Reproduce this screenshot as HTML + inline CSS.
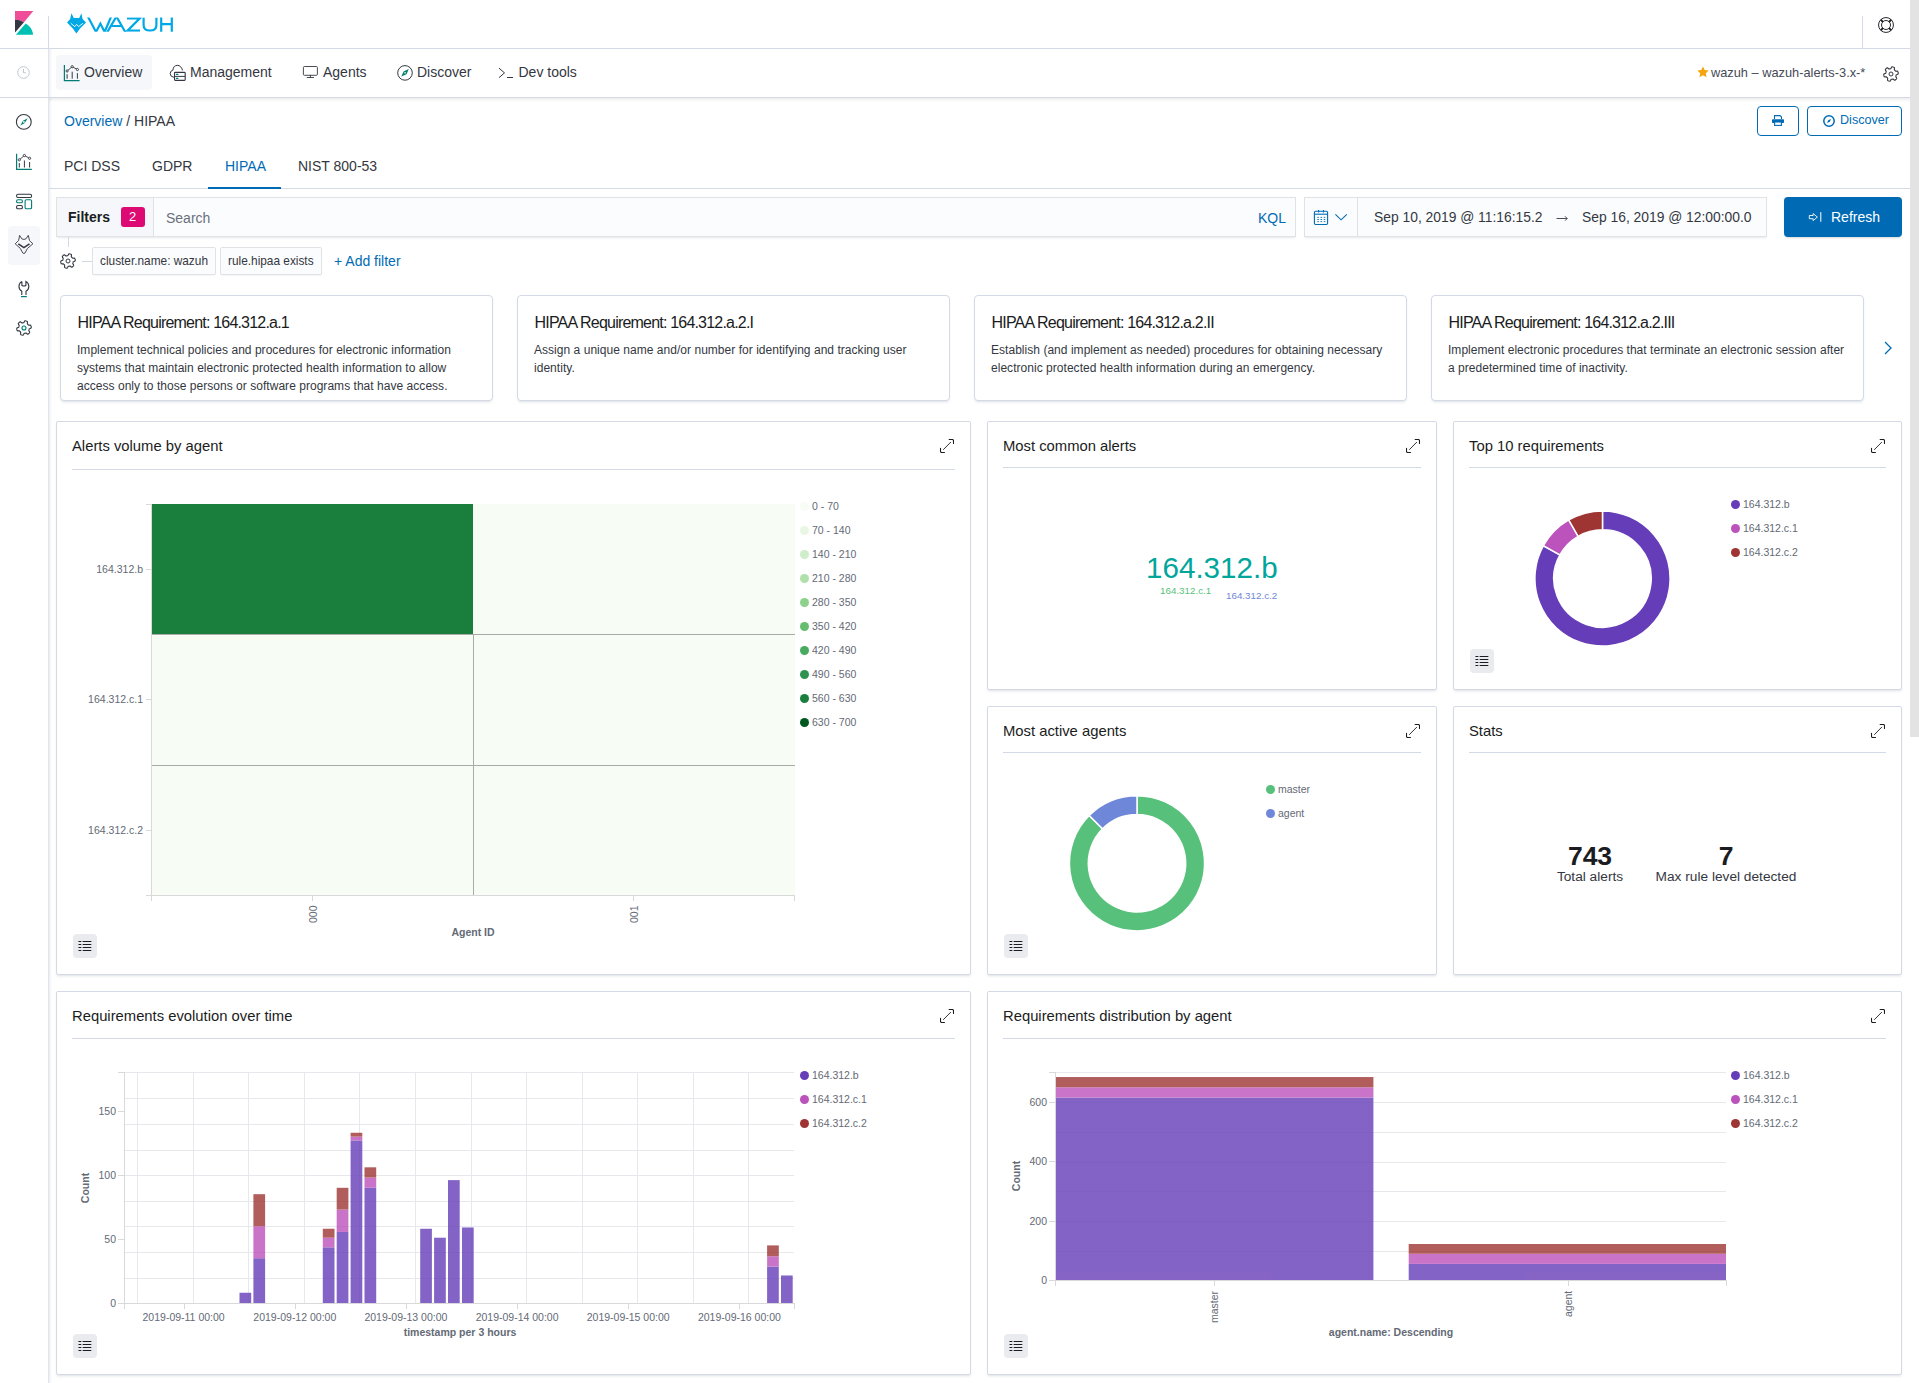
<!DOCTYPE html>
<html><head><meta charset="utf-8">
<style>
*{box-sizing:border-box;margin:0;padding:0}
html,body{width:1919px;height:1383px;overflow:hidden;background:#fff;font-family:"Liberation Sans",sans-serif;color:#343741}
.a{position:absolute}
.t{position:absolute;white-space:nowrap;line-height:1}
.hl{position:absolute;background:#d3dae6}
.btn{position:absolute;border:1px solid #006bb4;border-radius:4px;background:#fff}
.panel{position:absolute;background:#fff;border:1px solid #d3dae6;border-radius:2px;box-shadow:0 2px 3px -1px rgba(152,162,179,.35)}
.ptitle{position:absolute;left:15px;top:16px;font-size:15px;color:#1a1c21;white-space:nowrap;line-height:17px}
.psep{position:absolute;left:15px;height:1px;background:#d3dae6}
.exp{position:absolute;width:14px;height:14px}
.legbtn{position:absolute;width:25px;height:25px;border-radius:4px;background:#e9ebef}
.card{position:absolute;top:295px;height:106px;width:433px;border:1px solid #d3dae6;border-radius:4px;background:#fff;box-shadow:0 2px 3px -1px rgba(152,162,179,.35)}
.card h3{position:absolute;left:16.5px;top:18px;font-size:16px;font-weight:normal;letter-spacing:-0.8px;color:#1a1c21;white-space:nowrap;line-height:18px}
.card p{position:absolute;left:16px;top:45px;width:400px;font-size:12px;letter-spacing:0.035px;line-height:18px;color:#343741}
.lg{position:absolute;font-size:11px;color:#69707d;white-space:nowrap;line-height:12px}
.lg i{display:inline-block;width:8px;height:8px;border-radius:50%;margin-right:3px;vertical-align:-0px}
.ax{position:absolute;font-size:11px;color:#69707d;white-space:nowrap;line-height:12px}
</style></head><body>
<svg width="0" height="0" style="position:absolute"><defs><path id="gearp" d="M8.0 2.4 8.4 1.5 8.9 0.8 9.4 0.8 9.9 0.9 10.3 1.1 10.8 1.3 11.2 1.5 11.5 1.9 11.4 2.9 11.3 3.7 11.5 4.0 11.7 4.3 12.0 4.5 12.2 4.8 12.4 5.1 12.9 5.2 13.8 5.1 14.7 5.2 14.9 5.7 15.1 6.1 15.2 6.6 15.2 7.0 15.3 7.5 15.0 8.0 14.1 8.4 13.3 8.7 13.2 9.0 13.1 9.4 13.0 9.7 12.9 10.0 12.8 10.3 12.9 10.8 13.4 11.6 13.7 12.4 13.5 12.8 13.2 13.2 12.8 13.5 12.4 13.8 12.1 14.1 11.5 14.1 10.7 13.5 10.1 13.0 9.7 13.0 9.4 13.1 9.0 13.2 8.7 13.3 8.3 13.3 8.0 13.6 7.6 14.5 7.1 15.2 6.6 15.2 6.1 15.1 5.7 14.9 5.2 14.7 4.8 14.5 4.5 14.1 4.6 13.1 4.7 12.3 4.5 12.0 4.3 11.7 4.0 11.5 3.8 11.2 3.6 10.9 3.1 10.8 2.2 10.9 1.3 10.8 1.1 10.3 0.9 9.9 0.8 9.4 0.8 9.0 0.7 8.5 1.0 8.0 1.9 7.6 2.7 7.3 2.8 7.0 2.9 6.6 3.0 6.3 3.1 6.0 3.2 5.7 3.1 5.2 2.6 4.4 2.3 3.6 2.5 3.2 2.8 2.8 3.2 2.5 3.6 2.2 3.9 1.9 4.5 1.9 5.3 2.5 5.9 3.0 6.3 3.0 6.6 2.9 7.0 2.8 7.3 2.7 7.7 2.7Z"/></defs></svg>

<!-- ============ HEADER ============ -->
<div class="hl" style="left:0;top:48px;width:1910px;height:1px"></div>
<div class="hl" style="left:48px;top:16px;width:1px;height:33px"></div>
<div class="a" style="left:48px;top:49px;width:1px;height:1334px;background:#e1e4ea"></div>
<div class="a" style="left:49px;top:49px;width:3px;height:1334px;background:linear-gradient(90deg,rgba(152,162,179,.18),rgba(152,162,179,0))"></div>
<div class="hl" style="left:1862px;top:16px;width:1px;height:32px"></div>
<!-- kibana logo -->
<svg class="a" style="left:15px;top:11px" width="19" height="24" viewBox="0 0 19 24">
  <path d="M0 0H18.3L9 11.2Q4.5 8.6 0 8.8Z" fill="#f04e98"/>
  <path d="M0 8.8Q4.5 8.6 9 11.2L0 21.6Z" fill="#343741"/>
  <path d="M0.9 23.7L10.7 12.4C14.6 14.6 17.6 18.6 18.1 23.7Z" fill="#00bfb3"/>
</svg>
<!-- wazuh logo -->
<svg class="a" style="left:62px;top:8px" width="120" height="32" viewBox="62 8 120 32">
  <path d="M71.4 13.3 L73.8 18 L79.2 18 L81.4 13.3 L82.6 19 L86 22.4 L80 28.6 L76.4 33.6 L72.8 28.6 L67 22.4 L70.2 19Z" fill="#00a9e5"/>
  <path d="M70.8 23.3 L74.8 26.6 L76.7 24.4 L78.6 26.6 L82.9 23.3" stroke="#fff" stroke-width="0.9" fill="none"/>
  <defs><clipPath id="wzc"><rect x="86" y="17.4" width="90" height="14.3"/></clipPath></defs>
  <g fill="none" stroke="#00a9e5" stroke-width="2.2" stroke-linejoin="miter" stroke-linecap="butt" clip-path="url(#wzc)">
    <path d="M87.6 16 L96 32 L100.4 23.6 L104.6 32 L111.4 16"/>
    <path d="M106.8 33 L116.4 16.5 L125.8 33 M111.5 26 H121.5"/>
    <path d="M127 18.4 H139.8 L127.5 30.6 H140"/>
    <path d="M143.6 17.4 V25 C143.6 29.5 146 30.6 150 30.6 C154 30.6 156.4 29.5 156.4 25 V17.4"/>
    <path d="M161.2 16 V33 M171.8 16 V33 M161.2 24.2 H171.8"/>
  </g>
</svg>
<!-- help icon -->
<svg class="a" style="left:1876px;top:15px" width="20" height="20" viewBox="-10 -10 20 20">
  <circle cx="0" cy="0" r="7.45" fill="none" stroke="#1a1c21" stroke-width="0.95"/>
  <circle cx="0" cy="0" r="4.5" fill="none" stroke="#1a1c21" stroke-width="0.95"/>
  <path d="M-3.1 -3.1L-5.3 -5.3M3.1 -3.1L5.3 -5.3M-3.1 3.1L-5.3 5.3M3.1 3.1L5.3 5.3" stroke="#1a1c21" stroke-width="1.9"/>
</svg>

<!-- ============ NAV ROW ============ -->
<div class="hl" style="left:0;top:97px;width:1910px;height:1px"></div>
<div class="a" style="left:49px;top:98px;width:1861px;height:4px;background:linear-gradient(rgba(0,0,0,.07),rgba(0,0,0,0))"></div>
<!-- clock -->
<svg class="a" style="left:17px;top:66px" width="13" height="13" viewBox="0 0 13 13">
  <circle cx="6.5" cy="6.5" r="5.8" fill="none" stroke="#c2c7cf" stroke-width="1"/>
  <path d="M6.5 3V6.8H9" fill="none" stroke="#c2c7cf" stroke-width="1"/>
</svg>
<div class="a" style="left:56px;top:55px;width:96px;height:35px;background:#f5f7fa;border-radius:4px"></div>
<svg class="a" style="left:56px;top:58px" width="30" height="30" viewBox="56 58 30 30">
  <g fill="none" transform="translate(47.8,-88.8)">
    <path d="M16.6 153.8 V169.4 H31.8" stroke="#017d73" stroke-width="1.2"/>
    <path d="M19.3 159.8 L24.4 155.5 L29.6 158.3" stroke="#343741" stroke-width="0.9"/>
    <circle cx="19.3" cy="159.8" r="1.1" fill="#f5f7fa" stroke="#343741" stroke-width="0.9"/>
    <circle cx="24.4" cy="155.5" r="1.1" fill="#f5f7fa" stroke="#343741" stroke-width="0.9"/>
    <circle cx="29.6" cy="158.3" r="1.1" fill="#f5f7fa" stroke="#343741" stroke-width="0.9"/>
    <path d="M19.3 163V167.5 M24.4 160.5V167.5 M29.6 162V167.5" stroke="#343741" stroke-width="1"/>
  </g>
</svg>
<div class="t" style="left:84px;top:65px;font-size:14px;color:#343741">Overview</div>

<div class="t" style="left:190px;top:65px;font-size:14px;color:#343741">Management</div>

<div class="t" style="left:323px;top:65px;font-size:14px;color:#343741">Agents</div>

<div class="t" style="left:417px;top:65px;font-size:14px;color:#343741">Discover</div>
<div class="t" style="left:518.5px;top:65px;font-size:14px;color:#343741">Dev tools</div>
<svg class="a" style="left:160px;top:55px" width="360" height="35" viewBox="160 55 360 35">
  <g fill="none" stroke="#343741" stroke-width="1">
    <path d="M173.9 77.3 Q170.2 76.8 170.2 73.6 Q170.2 70.8 172.9 70.1 Q173.3 65.6 177.3 65.3 Q181 65.3 182.6 70.4"/>
    <rect x="174.5" y="72.4" width="10.7" height="8" rx="0.8" stroke-width="1.1"/>
    <path d="M174.5 76.4 H185.2"/>
    <path d="M176.4 74.4 H177.9 M176.4 78.4 H177.9" stroke="#017d73" stroke-width="1.2" stroke-linecap="round"/>
    <rect x="303.4" y="66.5" width="14" height="8.8" rx="1" stroke-width="0.9"/>
    <path d="M310.4 75.3 V77.4 M307.2 77.5 H313.6" stroke-width="0.9" stroke-linecap="round"/>
    <circle cx="405" cy="72.9" r="7.3" stroke-width="1"/>
    <path d="M408.8 69.1 L406.5 74.3 L401.3 76.6 L403.6 71.4Z" fill="#017d73" stroke="none"/>
    <circle cx="405.05" cy="72.85" r="0.8" fill="#fff" stroke="none"/>
    <path d="M499.3 68.4 L504.5 72.9 L499.3 77.4 M507.4 77.5 H512.7" stroke-width="1" stroke-linecap="round"/>
  </g>
</svg>
<!-- right -->
<svg class="a" style="left:1697px;top:66px" width="12" height="12" viewBox="0 0 24 24"><path d="M12 .8l3.4 7.3 8 .9-5.9 5.5 1.6 7.9L12 18.4l-7.1 4 1.6-7.9L.6 9l8-.9Z" fill="#f5a30f"/></svg>
<div class="t" style="left:1711px;top:67px;font-size:12.8px;color:#454a55">wazuh – wazuh-alerts-3.x-*</div>
<svg class="a" style="left:1883px;top:66px" width="16" height="16" viewBox="0 0 16 16">
  <use href="#gearp" fill="none" stroke="#343741" stroke-width="1.1"/>
  <circle cx="8" cy="8" r="2" fill="none" stroke="#343741" stroke-width="1"/>
</svg>

<!-- ============ LEFT NAV ============ -->
<div class="a" style="left:8px;top:226px;width:32px;height:39px;background:#f5f7fa;border-radius:4px"></div>
<svg class="a" style="left:0;top:100px" width="48" height="250" viewBox="0 100 48 250">
  <g fill="none" stroke-width="1.1">
    <circle cx="23.8" cy="121.9" r="7.4" stroke="#343741"/>
    <path d="M27.7 118.3 L24.8 123.1 L20.3 125.5 L23.0 120.8Z" fill="#017d73" stroke="none"/>
    <circle cx="23.9" cy="121.9" r="0.9" fill="#fff" stroke="none"/>
    <path d="M16.6 153.8 V169.4 H31.8" stroke="#017d73" stroke-width="1.2"/>
    <path d="M19.3 159.8 L24.4 155.5 L29.6 158.3" stroke="#343741" stroke-width="0.9"/>
    <circle cx="19.3" cy="159.8" r="1.1" fill="#fff" stroke="#343741" stroke-width="0.9"/>
    <circle cx="24.4" cy="155.5" r="1.1" fill="#fff" stroke="#343741" stroke-width="0.9"/>
    <circle cx="29.6" cy="158.3" r="1.1" fill="#fff" stroke="#343741" stroke-width="0.9"/>
    <path d="M19.3 163V167.5 M24.4 160.5V167.5 M29.6 162V167.5" stroke="#343741" stroke-width="1"/>
    <rect x="16.6" y="194.3" width="15" height="3.2" rx="1.4" stroke="#343741"/>
    <rect x="16.6" y="199.7" width="5.8" height="3" rx="1.3" stroke="#017d73"/>
    <rect x="16.6" y="205.5" width="5.8" height="3.2" rx="1.3" stroke="#343741"/>
    <rect x="25.1" y="199.7" width="6.5" height="9" rx="1.3" stroke="#017d73"/>
    <path d="M19.6 235.4 L21.9 238.9 Q23.9 240 25.9 238.9 L28.3 235.4 L29.5 240.5 L32.9 243.8 L27.4 248.5 L25 253 Q23.9 254 22.8 253 L20.4 248.5 L15.2 243.8 L18.6 240.5 Z" stroke="#343741" stroke-width="0.9" stroke-linejoin="round"/>
    <path d="M18.3 243.9 L23.9 247.6 L29.5 243.9" stroke="#343741" stroke-width="1.6"/>
    <path d="M21.9 281.4 V285.5 Q23.9 286.6 25.9 285.5 V281.4 A5.6 5.6 0 0 1 26 291.2 V295 M21.9 281.4 A5.6 5.6 0 0 0 21.8 291.2 V295" stroke="#343741" stroke-width="1.1"/>
    <path d="M21 296.6 H26.8" stroke="#017d73" stroke-width="1.2"/>
    <use href="#gearp" transform="translate(16,320)" stroke="#343741" stroke-width="1.1"/>
    <circle cx="24" cy="328" r="2" stroke="#017d73"/>
  </g>
</svg>

<!-- ============ BREADCRUMB / TABS ============ -->
<div class="t" style="left:64px;top:114px;font-size:14px;color:#343741"><span style="color:#006bb4">Overview</span> / HIPAA</div>
<div class="btn" style="left:1757px;top:106px;width:42px;height:30px"></div>
<svg class="a" style="left:1772px;top:115px" width="12" height="11" viewBox="0 0 12 11">
  <path d="M2.5 4V0.6H8L9.5 2V4" fill="none" stroke="#006bb4" stroke-width="1.1"/>
  <rect x="0" y="4.3" width="12" height="3.7" rx="0.8" fill="#006bb4"/>
  <rect x="2.6" y="7" width="6.8" height="3.4" fill="#fff" stroke="#006bb4" stroke-width="1.1"/>
</svg>
<div class="btn" style="left:1807px;top:106px;width:95px;height:30px"></div>
<svg class="a" style="left:1823px;top:115px" width="12" height="12" viewBox="0 0 12 12">
  <circle cx="6" cy="6" r="5.2" fill="none" stroke="#006bb4" stroke-width="1.5"/>
  <path d="M8 4 L6.8 6.8 L4 8 L5.2 5.2Z" fill="#006bb4"/>
</svg>
<div class="t" style="left:1840px;top:114px;font-size:12.6px;color:#006bb4">Discover</div>

<div class="hl" style="left:49px;top:188px;width:1861px;height:1px"></div>
<div class="t" style="left:64px;top:159px;font-size:14px;color:#343741">PCI DSS</div>
<div class="t" style="left:152px;top:159px;font-size:14px;color:#343741">GDPR</div>
<div class="t" style="left:225px;top:159px;font-size:14px;color:#006bb4">HIPAA</div>
<div class="t" style="left:298px;top:159px;font-size:14px;color:#343741">NIST 800-53</div>
<div class="a" style="left:208px;top:187px;width:73px;height:2px;background:#006bb4"></div>

<!-- ============ FILTER BAR ============ -->
<div class="a" style="left:56px;top:197px;width:1240px;height:40px;background:#fbfcfd;border:1px solid #e0e2e6;box-shadow:0 2px 2px -1px rgba(152,162,179,.25)"></div>
<div class="a" style="left:57px;top:198px;width:97px;height:38px;background:#f5f7fa;border-right:1px solid #dfe1e5"></div>
<div class="t" style="left:68px;top:210px;font-size:14px;font-weight:bold;color:#1a1c21">Filters</div>
<div class="a" style="left:121px;top:207px;width:24px;height:20px;background:#dd0a73;border-radius:3px"></div>
<div class="t" style="left:129px;top:210px;font-size:13px;color:#fff">2</div>
<div class="t" style="left:166px;top:211px;font-size:14px;color:#69707d">Search</div>
<div class="t" style="left:1258px;top:211px;font-size:14px;color:#006bb4">KQL</div>

<div class="a" style="left:1304px;top:197px;width:463px;height:40px;background:#fbfcfd;border:1px solid #e0e2e6;box-shadow:0 2px 2px -1px rgba(152,162,179,.25)"></div>
<div class="a" style="left:1305px;top:198px;width:53px;height:38px;background:#fbfcfd;border-right:1px solid #dfe1e5"></div>
<svg class="a" style="left:1310px;top:205px" width="40" height="25" viewBox="1310 205 40 25">
  <g fill="none" stroke="#006bb4">
    <rect x="1314.4" y="211.3" width="13.2" height="13.2" rx="1.2" stroke-width="1.1"/>
    <path d="M1314.4 214.2H1327.6" stroke-width="1.1"/>
    <path d="M1318.6 210V212.6M1323.4 210V212.6" stroke-width="1.1"/>
    <path d="M1317.3 217.4h1.6M1320.5 217.4h1.6M1323.7 217.4h1.6M1317.3 219.5h1.6M1320.5 219.5h1.6M1323.7 219.5h1.6M1317.3 221.6h1.6M1320.5 221.6h1.6M1323.7 221.6h1.6" stroke-width="0.9"/>
    <path d="M1335.4 214.4L1341.1 219.8L1346.8 214.4" stroke-width="1.1"/>
  </g>
</svg>

<div class="t" style="left:1374px;top:211px;font-size:13.85px;color:#343741">Sep 10, 2019 @ 11:16:15.2</div>
<svg class="a" style="left:1556px;top:215px" width="12" height="7" viewBox="0 0 12 7"><path d="M0.5 3.5H11.2M9 1.3L11.2 3.5L9 5.7" fill="none" stroke="#4a4f5a" stroke-width="1"/></svg>
<div class="t" style="left:1582px;top:211px;font-size:13.85px;color:#343741">Sep 16, 2019 @ 12:00:00.0</div>

<div class="a" style="left:1784px;top:197px;width:118px;height:40px;background:#006bb4;border-radius:4px;box-shadow:0 2px 2px -1px rgba(0,0,0,.15)"></div>
<svg class="a" style="left:1805px;top:208px" width="20" height="18" viewBox="1805 208 20 18">
  <path d="M1809.3 215.5H1813.1V213.6L1817.4 217.1L1813.1 220.6V218.7H1809.3Z" fill="none" stroke="#fff" stroke-width="0.9" stroke-linejoin="round"/>
  <path d="M1820.8 212.1V221.8" stroke="#fff" stroke-width="1"/>
</svg>
<div class="t" style="left:1831px;top:210px;font-size:14px;color:#fff">Refresh</div>

<!-- filter pills -->
<div class="a" style="left:68px;top:237px;width:1px;height:10px;background:#d3dae6"></div>
<svg class="a" style="left:60px;top:253px" width="16" height="16" viewBox="0 0 16 16">
  <use href="#gearp" fill="none" stroke="#343741" stroke-width="1.1"/>
  <circle cx="8" cy="8" r="2" fill="none" stroke="#343741" stroke-width="1"/>
</svg>
<div class="a" style="left:82px;top:261px;width:10px;height:1px;background:#d3dae6"></div>
<div class="a" style="left:92px;top:247px;width:124px;height:28px;background:#fbfcfd;border:1px solid #e0e2e6;border-radius:2px;box-shadow:0 1px 1px rgba(0,0,0,.04)"></div>
<div class="t" style="left:100px;top:256px;font-size:11.85px;color:#343741">cluster.name: wazuh</div>
<div class="a" style="left:220px;top:247px;width:102px;height:28px;background:#fbfcfd;border:1px solid #e0e2e6;border-radius:2px;box-shadow:0 1px 1px rgba(0,0,0,.04)"></div>
<div class="t" style="left:228px;top:256px;font-size:11.85px;color:#343741">rule.hipaa exists</div>
<div class="t" style="left:334px;top:254px;font-size:14px;color:#006bb4">+ Add filter</div>

<!-- ============ CARDS ============ -->
<div class="card" style="left:60px"><h3>HIPAA Requirement: 164.312.a.1</h3><p>Implement technical policies and procedures for electronic information systems that maintain electronic protected health information to allow access only to those persons or software programs that have access.</p></div>
<div class="card" style="left:517px"><h3>HIPAA Requirement: 164.312.a.2.I</h3><p>Assign a unique name and/or number for identifying and tracking user identity.</p></div>
<div class="card" style="left:974px"><h3>HIPAA Requirement: 164.312.a.2.II</h3><p>Establish (and implement as needed) procedures for obtaining necessary electronic protected health information during an emergency.</p></div>
<div class="card" style="left:1431px"><h3>HIPAA Requirement: 164.312.a.2.III</h3><p>Implement electronic procedures that terminate an electronic session after a predetermined time of inactivity.</p></div>
<svg class="a" style="left:1884px;top:341px" width="8" height="14" viewBox="0 0 8 14">
  <path d="M1 1 7 7 1 13" fill="none" stroke="#006bb4" stroke-width="1.3"/>
</svg>

<!-- PANELS_START -->
<div class="panel" style="left:56px;top:421px;width:915px;height:554px"></div>
<div class="t" style="left:72px;top:438px;font-size:14.8px;color:#1a1c21;line-height:17px">Alerts volume by agent</div>
<div class="a" style="left:72px;top:469px;width:883px;height:1px;background:#d3dae6"></div>
<svg class="exp" style="left:940px;top:439px" width="14" height="14" viewBox="0 0 14 14"><path d="M9.2 0.5H12.3Q13.5 0.5 13.5 1.7V4.5M0.5 9.2V12.3Q0.5 13.5 1.7 13.5H4.5" fill="none" stroke="#1a1c21" stroke-width="1.1" stroke-linecap="round"/><path d="M10.6 3.3L3.5 10.5" stroke="#1a1c21" stroke-width="0.9" stroke-linecap="round"/></svg>
<div class="a" style="left:152px;top:504px;width:643px;height:391px;background:#f7fcf5"></div>
<div class="a" style="left:152px;top:504px;width:321px;height:130px;background:#1a7f3d"></div>
<div class="a" style="left:152px;top:634px;width:643px;height:1px;background:#a8aba8"></div>
<div class="a" style="left:152px;top:765px;width:643px;height:1px;background:#a8aba8"></div>
<div class="a" style="left:473px;top:634px;width:1px;height:261px;background:#a8aba8"></div>
<div class="a" style="left:151px;top:895px;width:644px;height:1px;background:#d9d9d9"></div>
<div class="a" style="left:151px;top:504px;width:1px;height:392px;background:#d9d9d9"></div>
<div class="a" style="left:151px;top:895px;width:1px;height:6px;background:#d9d9d9"></div>
<div class="a" style="left:312px;top:895px;width:1px;height:6px;background:#d9d9d9"></div>
<div class="a" style="left:633px;top:895px;width:1px;height:6px;background:#d9d9d9"></div>
<div class="a" style="left:794px;top:895px;width:1px;height:6px;background:#d9d9d9"></div>
<div class="a" style="left:146px;top:504px;width:6px;height:1px;background:#d9d9d9"></div>
<div class="a" style="left:146px;top:569px;width:6px;height:1px;background:#d9d9d9"></div>
<div class="a" style="left:146px;top:699px;width:6px;height:1px;background:#d9d9d9"></div>
<div class="a" style="left:146px;top:830px;width:6px;height:1px;background:#d9d9d9"></div>
<div class="a" style="left:146px;top:895px;width:6px;height:1px;background:#d9d9d9"></div>
<div class="t" style="right:1776px;top:563px;font-size:10.5px;color:#646a76;line-height:12px">164.312.b</div>
<div class="t" style="right:1776px;top:693px;font-size:10.5px;color:#646a76;line-height:12px">164.312.c.1</div>
<div class="t" style="right:1776px;top:824px;font-size:10.5px;color:#646a76;line-height:12px">164.312.c.2</div>
<div class="t" style="left:307px;top:906px;font-size:10.5px;color:#646a76;line-height:12px;transform-origin:0 0;transform:translate(0,17px) rotate(-90deg)">000</div>
<div class="t" style="left:628px;top:906px;font-size:10.5px;color:#646a76;line-height:12px;transform-origin:0 0;transform:translate(0,17px) rotate(-90deg)">001</div>
<div class="t" style="left:433px;top:926px;width:80px;text-align:center;font-size:10.5px;font-weight:bold;color:#646a76;line-height:12px">Agent ID</div>
<div class="a" style="left:800.0px;top:501.5px;width:9px;height:9px;border-radius:50%;background:#f7fcf5"></div>
<div class="t" style="left:812.0px;top:500px;font-size:10.5px;color:#646a76;line-height:12px">0 - 70</div>
<div class="a" style="left:800.0px;top:525.5px;width:9px;height:9px;border-radius:50%;background:#e8f6e3"></div>
<div class="t" style="left:812.0px;top:524px;font-size:10.5px;color:#646a76;line-height:12px">70 - 140</div>
<div class="a" style="left:800.0px;top:549.5px;width:9px;height:9px;border-radius:50%;background:#d0edca"></div>
<div class="t" style="left:812.0px;top:548px;font-size:10.5px;color:#646a76;line-height:12px">140 - 210</div>
<div class="a" style="left:800.0px;top:573.5px;width:9px;height:9px;border-radius:50%;background:#b2e0ab"></div>
<div class="t" style="left:812.0px;top:572px;font-size:10.5px;color:#646a76;line-height:12px">210 - 280</div>
<div class="a" style="left:800.0px;top:597.5px;width:9px;height:9px;border-radius:50%;background:#8ed18c"></div>
<div class="t" style="left:812.0px;top:596px;font-size:10.5px;color:#646a76;line-height:12px">280 - 350</div>
<div class="a" style="left:800.0px;top:621.5px;width:9px;height:9px;border-radius:50%;background:#66bd6f"></div>
<div class="t" style="left:812.0px;top:620px;font-size:10.5px;color:#646a76;line-height:12px">350 - 420</div>
<div class="a" style="left:800.0px;top:645.5px;width:9px;height:9px;border-radius:50%;background:#48aa5e"></div>
<div class="t" style="left:812.0px;top:644px;font-size:10.5px;color:#646a76;line-height:12px">420 - 490</div>
<div class="a" style="left:800.0px;top:669.5px;width:9px;height:9px;border-radius:50%;background:#2d934f"></div>
<div class="t" style="left:812.0px;top:668px;font-size:10.5px;color:#646a76;line-height:12px">490 - 560</div>
<div class="a" style="left:800.0px;top:693.5px;width:9px;height:9px;border-radius:50%;background:#1a7f3d"></div>
<div class="t" style="left:812.0px;top:692px;font-size:10.5px;color:#646a76;line-height:12px">560 - 630</div>
<div class="a" style="left:800.0px;top:717.5px;width:9px;height:9px;border-radius:50%;background:#01581f"></div>
<div class="t" style="left:812.0px;top:716px;font-size:10.5px;color:#646a76;line-height:12px">630 - 700</div>
<div class="a" style="left:73px;top:934px;width:24px;height:24px;border-radius:4px;background:#e9ebef"></div><svg class="a" style="left:78px;top:941px" width="14" height="11" viewBox="0 0 14 11"><path d="M0.9 0.5H2.9M0.9 3.5H2.9M0.9 6.5H2.9M0.9 9.5H2.9M5.1 0.5H12.9M5.1 3.5H12.9M5.1 6.5H12.9M5.1 9.5H12.9" stroke="#1a1c21" stroke-width="1.1" stroke-linecap="round"/></svg>
<div class="panel" style="left:987px;top:421px;width:450px;height:269px"></div>
<div class="t" style="left:1003px;top:438px;font-size:14.8px;color:#1a1c21;line-height:17px">Most common alerts</div>
<div class="a" style="left:1003px;top:467px;width:418px;height:1px;background:#d3dae6"></div>
<svg class="exp" style="left:1406px;top:439px" width="14" height="14" viewBox="0 0 14 14"><path d="M9.2 0.5H12.3Q13.5 0.5 13.5 1.7V4.5M0.5 9.2V12.3Q0.5 13.5 1.7 13.5H4.5" fill="none" stroke="#1a1c21" stroke-width="1.1" stroke-linecap="round"/><path d="M10.6 3.3L3.5 10.5" stroke="#1a1c21" stroke-width="0.9" stroke-linecap="round"/></svg>
<div class="t" style="left:1146px;top:553px;font-size:29.6px;color:#00a69b;line-height:30px">164.312.b</div>
<div class="t" style="left:1160px;top:585px;font-size:9.8px;color:#57c17b;line-height:12px">164.312.c.1</div>
<div class="t" style="left:1226px;top:590px;font-size:9.8px;color:#6f87d8;line-height:12px">164.312.c.2</div>
<div class="panel" style="left:1453px;top:421px;width:449px;height:269px"></div>
<div class="t" style="left:1469px;top:438px;font-size:14.8px;color:#1a1c21;line-height:17px">Top 10 requirements</div>
<div class="a" style="left:1469px;top:467px;width:417px;height:1px;background:#d3dae6"></div>
<svg class="exp" style="left:1871px;top:439px" width="14" height="14" viewBox="0 0 14 14"><path d="M9.2 0.5H12.3Q13.5 0.5 13.5 1.7V4.5M0.5 9.2V12.3Q0.5 13.5 1.7 13.5H4.5" fill="none" stroke="#1a1c21" stroke-width="1.1" stroke-linecap="round"/><path d="M10.6 3.3L3.5 10.5" stroke="#1a1c21" stroke-width="0.9" stroke-linecap="round"/></svg>
<svg class="a" style="left:1531px;top:507px" width="141" height="141" viewBox="-71.50 -71.50 141 141"><path d="M0.00 -67.60A67.6 67.6 0 1 1 -59.12 -32.77L-42.59 -23.61A48.7 48.7 0 1 0 0.00 -48.70Z" fill="#663db8" stroke="#fff" stroke-width="1.5"/><path d="M-59.12 -32.77A67.6 67.6 0 0 1 -33.80 -58.54L-24.35 -42.18A48.7 48.7 0 0 0 -42.59 -23.61Z" fill="#bc52bc" stroke="#fff" stroke-width="1.5"/><path d="M-33.80 -58.54A67.6 67.6 0 0 1 -0.00 -67.60L-0.00 -48.70A48.7 48.7 0 0 0 -24.35 -42.18Z" fill="#9e3533" stroke="#fff" stroke-width="1.5"/></svg>
<div class="a" style="left:1731.0px;top:499.5px;width:9px;height:9px;border-radius:50%;background:#663db8"></div>
<div class="t" style="left:1743.0px;top:498px;font-size:10.5px;color:#646a76;line-height:12px">164.312.b</div>
<div class="a" style="left:1731.0px;top:523.5px;width:9px;height:9px;border-radius:50%;background:#bc52bc"></div>
<div class="t" style="left:1743.0px;top:522px;font-size:10.5px;color:#646a76;line-height:12px">164.312.c.1</div>
<div class="a" style="left:1731.0px;top:547.5px;width:9px;height:9px;border-radius:50%;background:#9e3533"></div>
<div class="t" style="left:1743.0px;top:546px;font-size:10.5px;color:#646a76;line-height:12px">164.312.c.2</div>
<div class="a" style="left:1470px;top:649px;width:24px;height:24px;border-radius:4px;background:#e9ebef"></div><svg class="a" style="left:1475px;top:656px" width="14" height="11" viewBox="0 0 14 11"><path d="M0.9 0.5H2.9M0.9 3.5H2.9M0.9 6.5H2.9M0.9 9.5H2.9M5.1 0.5H12.9M5.1 3.5H12.9M5.1 6.5H12.9M5.1 9.5H12.9" stroke="#1a1c21" stroke-width="1.1" stroke-linecap="round"/></svg>
<div class="panel" style="left:987px;top:706px;width:450px;height:269px"></div>
<div class="t" style="left:1003px;top:723px;font-size:14.8px;color:#1a1c21;line-height:17px">Most active agents</div>
<div class="a" style="left:1003px;top:752px;width:418px;height:1px;background:#d3dae6"></div>
<svg class="exp" style="left:1406px;top:724px" width="14" height="14" viewBox="0 0 14 14"><path d="M9.2 0.5H12.3Q13.5 0.5 13.5 1.7V4.5M0.5 9.2V12.3Q0.5 13.5 1.7 13.5H4.5" fill="none" stroke="#1a1c21" stroke-width="1.1" stroke-linecap="round"/><path d="M10.6 3.3L3.5 10.5" stroke="#1a1c21" stroke-width="0.9" stroke-linecap="round"/></svg>
<svg class="a" style="left:1066px;top:792px" width="141" height="141" viewBox="-71.00 -71.30 141 141"><path d="M0.00 -67.60A67.6 67.6 0 1 1 -47.80 -47.80L-34.44 -34.44A48.7 48.7 0 1 0 0.00 -48.70Z" fill="#57c17b" stroke="#fff" stroke-width="1.5"/><path d="M-47.80 -47.80A67.6 67.6 0 0 1 -0.00 -67.60L-0.00 -48.70A48.7 48.7 0 0 0 -34.44 -34.44Z" fill="#6f87d8" stroke="#fff" stroke-width="1.5"/></svg>
<div class="a" style="left:1266.0px;top:784.5px;width:9px;height:9px;border-radius:50%;background:#57c17b"></div>
<div class="t" style="left:1278.0px;top:783px;font-size:10.5px;color:#646a76;line-height:12px">master</div>
<div class="a" style="left:1266.0px;top:808.5px;width:9px;height:9px;border-radius:50%;background:#6f87d8"></div>
<div class="t" style="left:1278.0px;top:807px;font-size:10.5px;color:#646a76;line-height:12px">agent</div>
<div class="a" style="left:1004px;top:934px;width:24px;height:24px;border-radius:4px;background:#e9ebef"></div><svg class="a" style="left:1009px;top:941px" width="14" height="11" viewBox="0 0 14 11"><path d="M0.9 0.5H2.9M0.9 3.5H2.9M0.9 6.5H2.9M0.9 9.5H2.9M5.1 0.5H12.9M5.1 3.5H12.9M5.1 6.5H12.9M5.1 9.5H12.9" stroke="#1a1c21" stroke-width="1.1" stroke-linecap="round"/></svg>
<div class="panel" style="left:1453px;top:706px;width:449px;height:269px"></div>
<div class="t" style="left:1469px;top:723px;font-size:14.8px;color:#1a1c21;line-height:17px">Stats</div>
<div class="a" style="left:1469px;top:752px;width:417px;height:1px;background:#d3dae6"></div>
<svg class="exp" style="left:1871px;top:724px" width="14" height="14" viewBox="0 0 14 14"><path d="M9.2 0.5H12.3Q13.5 0.5 13.5 1.7V4.5M0.5 9.2V12.3Q0.5 13.5 1.7 13.5H4.5" fill="none" stroke="#1a1c21" stroke-width="1.1" stroke-linecap="round"/><path d="M10.6 3.3L3.5 10.5" stroke="#1a1c21" stroke-width="0.9" stroke-linecap="round"/></svg>
<div class="t" style="left:1540px;top:841px;width:100px;text-align:center;font-size:26.5px;font-weight:bold;color:#1a1c21;line-height:30px">743</div>
<div class="t" style="left:1540px;top:869px;width:100px;text-align:center;font-size:13.7px;color:#343741;line-height:16px">Total alerts</div>
<div class="t" style="left:1626px;top:841px;width:200px;text-align:center;font-size:26.5px;font-weight:bold;color:#1a1c21;line-height:30px">7</div>
<div class="t" style="left:1626px;top:869px;width:200px;text-align:center;font-size:13.7px;color:#343741;line-height:16px">Max rule level detected</div>
<div class="panel" style="left:56px;top:991px;width:915px;height:384px"></div>
<div class="t" style="left:72px;top:1008px;font-size:14.8px;color:#1a1c21;line-height:17px">Requirements evolution over time</div>
<div class="a" style="left:72px;top:1038px;width:883px;height:1px;background:#d3dae6"></div>
<svg class="exp" style="left:940px;top:1009px" width="14" height="14" viewBox="0 0 14 14"><path d="M9.2 0.5H12.3Q13.5 0.5 13.5 1.7V4.5M0.5 9.2V12.3Q0.5 13.5 1.7 13.5H4.5" fill="none" stroke="#1a1c21" stroke-width="1.1" stroke-linecap="round"/><path d="M10.6 3.3L3.5 10.5" stroke="#1a1c21" stroke-width="0.9" stroke-linecap="round"/></svg>
<div class="a" style="left:124px;top:1278px;width:670px;height:1px;background:#e6e8ec"></div>
<div class="a" style="left:124px;top:1252px;width:670px;height:1px;background:#e6e8ec"></div>
<div class="a" style="left:124px;top:1226px;width:670px;height:1px;background:#e6e8ec"></div>
<div class="a" style="left:124px;top:1201px;width:670px;height:1px;background:#e6e8ec"></div>
<div class="a" style="left:124px;top:1175px;width:670px;height:1px;background:#e6e8ec"></div>
<div class="a" style="left:124px;top:1150px;width:670px;height:1px;background:#e6e8ec"></div>
<div class="a" style="left:124px;top:1124px;width:670px;height:1px;background:#e6e8ec"></div>
<div class="a" style="left:124px;top:1098px;width:670px;height:1px;background:#e6e8ec"></div>
<div class="a" style="left:124px;top:1072px;width:670px;height:1px;background:#e6e8ec"></div>
<div class="a" style="left:137.3px;top:1072px;width:1px;height:231px;background:#e6e8ec"></div>
<div class="a" style="left:192.8px;top:1072px;width:1px;height:231px;background:#e6e8ec"></div>
<div class="a" style="left:248.4px;top:1072px;width:1px;height:231px;background:#e6e8ec"></div>
<div class="a" style="left:303.9px;top:1072px;width:1px;height:231px;background:#e6e8ec"></div>
<div class="a" style="left:359.4px;top:1072px;width:1px;height:231px;background:#e6e8ec"></div>
<div class="a" style="left:414.9px;top:1072px;width:1px;height:231px;background:#e6e8ec"></div>
<div class="a" style="left:470.5px;top:1072px;width:1px;height:231px;background:#e6e8ec"></div>
<div class="a" style="left:526.0px;top:1072px;width:1px;height:231px;background:#e6e8ec"></div>
<div class="a" style="left:581.5px;top:1072px;width:1px;height:231px;background:#e6e8ec"></div>
<div class="a" style="left:637.1px;top:1072px;width:1px;height:231px;background:#e6e8ec"></div>
<div class="a" style="left:692.6px;top:1072px;width:1px;height:231px;background:#e6e8ec"></div>
<div class="a" style="left:748.1px;top:1072px;width:1px;height:231px;background:#e6e8ec"></div>
<div class="a" style="left:124px;top:1072px;width:1px;height:232px;background:#d9d9d9"></div>
<div class="a" style="left:124px;top:1303px;width:670px;height:1px;background:#d9d9d9"></div>
<div class="a" style="left:794px;top:1303px;width:1px;height:6px;background:#d9d9d9"></div>
<div class="a" style="left:124px;top:1303px;width:1px;height:6px;background:#d9d9d9"></div>
<div class="a" style="left:118px;top:1072px;width:6px;height:1px;background:#d9d9d9"></div>
<div class="a" style="left:118px;top:1303.0px;width:6px;height:1px;background:#d9d9d9"></div>
<div class="t" style="right:1803px;top:1297.0px;font-size:10.5px;color:#646a76;line-height:12px">0</div>
<div class="a" style="left:118px;top:1239.0px;width:6px;height:1px;background:#d9d9d9"></div>
<div class="t" style="right:1803px;top:1233.0px;font-size:10.5px;color:#646a76;line-height:12px">50</div>
<div class="a" style="left:118px;top:1175.0px;width:6px;height:1px;background:#d9d9d9"></div>
<div class="t" style="right:1803px;top:1169.0px;font-size:10.5px;color:#646a76;line-height:12px">100</div>
<div class="a" style="left:118px;top:1111.0px;width:6px;height:1px;background:#d9d9d9"></div>
<div class="t" style="right:1803px;top:1105.0px;font-size:10.5px;color:#646a76;line-height:12px">150</div>
<div class="a" style="left:183.6px;top:1303px;width:1px;height:6px;background:#d9d9d9"></div>
<div class="t" style="left:133.6px;top:1311px;width:100px;text-align:center;font-size:10.5px;color:#646a76;line-height:12px">2019-09-11 00:00</div>
<div class="a" style="left:294.8px;top:1303px;width:1px;height:6px;background:#d9d9d9"></div>
<div class="t" style="left:244.8px;top:1311px;width:100px;text-align:center;font-size:10.5px;color:#646a76;line-height:12px">2019-09-12 00:00</div>
<div class="a" style="left:405.9px;top:1303px;width:1px;height:6px;background:#d9d9d9"></div>
<div class="t" style="left:355.9px;top:1311px;width:100px;text-align:center;font-size:10.5px;color:#646a76;line-height:12px">2019-09-13 00:00</div>
<div class="a" style="left:517.1px;top:1303px;width:1px;height:6px;background:#d9d9d9"></div>
<div class="t" style="left:467.1px;top:1311px;width:100px;text-align:center;font-size:10.5px;color:#646a76;line-height:12px">2019-09-14 00:00</div>
<div class="a" style="left:628.2px;top:1303px;width:1px;height:6px;background:#d9d9d9"></div>
<div class="t" style="left:578.2px;top:1311px;width:100px;text-align:center;font-size:10.5px;color:#646a76;line-height:12px">2019-09-15 00:00</div>
<div class="a" style="left:739.4px;top:1303px;width:1px;height:6px;background:#d9d9d9"></div>
<div class="t" style="left:689.4px;top:1311px;width:100px;text-align:center;font-size:10.5px;color:#646a76;line-height:12px">2019-09-16 00:00</div>
<div class="t" style="left:360px;top:1326px;width:200px;text-align:center;font-size:10.5px;font-weight:bold;color:#646a76;line-height:12px">timestamp per 3 hours</div>
<div class="t" style="left:55px;top:1182px;width:60px;text-align:center;font-size:10.5px;font-weight:bold;color:#646a76;line-height:12px;transform:rotate(-90deg)">Count</div>
<svg class="a" style="left:0;top:0" width="1919" height="1383" viewBox="0 0 1919 1383"><g opacity=".8"><rect x="239.5" y="1292.76" width="11.7" height="10.24" fill="#663db8"/><rect x="253.4" y="1258.20" width="11.7" height="44.80" fill="#663db8"/><rect x="253.4" y="1226.20" width="11.7" height="32.00" fill="#bc52bc"/><rect x="253.4" y="1194.20" width="11.7" height="32.00" fill="#9e3533"/><rect x="322.8" y="1247.32" width="11.7" height="55.68" fill="#663db8"/><rect x="322.8" y="1237.72" width="11.7" height="9.60" fill="#bc52bc"/><rect x="322.8" y="1228.76" width="11.7" height="8.96" fill="#9e3533"/><rect x="336.7" y="1231.96" width="11.7" height="71.04" fill="#663db8"/><rect x="336.7" y="1209.56" width="11.7" height="22.40" fill="#bc52bc"/><rect x="336.7" y="1187.80" width="11.7" height="21.76" fill="#9e3533"/><rect x="350.6" y="1140.44" width="11.7" height="162.56" fill="#663db8"/><rect x="350.6" y="1136.60" width="11.7" height="3.84" fill="#bc52bc"/><rect x="350.6" y="1132.76" width="11.7" height="3.84" fill="#9e3533"/><rect x="364.5" y="1187.80" width="11.7" height="115.20" fill="#663db8"/><rect x="364.5" y="1177.56" width="11.7" height="10.24" fill="#bc52bc"/><rect x="364.5" y="1167.32" width="11.7" height="10.24" fill="#9e3533"/><rect x="420.2" y="1228.76" width="11.7" height="74.24" fill="#663db8"/><rect x="434.1" y="1237.72" width="11.7" height="65.28" fill="#663db8"/><rect x="448" y="1180.12" width="11.7" height="122.88" fill="#663db8"/><rect x="462" y="1227.48" width="11.7" height="75.52" fill="#663db8"/><rect x="767.1" y="1266.52" width="11.7" height="36.48" fill="#663db8"/><rect x="767.1" y="1256.28" width="11.7" height="10.24" fill="#bc52bc"/><rect x="767.1" y="1245.40" width="11.7" height="10.88" fill="#9e3533"/><rect x="781" y="1275.48" width="11.7" height="27.52" fill="#663db8"/></g></svg>
<div class="a" style="left:800.0px;top:1070.5px;width:9px;height:9px;border-radius:50%;background:#663db8"></div>
<div class="t" style="left:812.0px;top:1069px;font-size:10.5px;color:#646a76;line-height:12px">164.312.b</div>
<div class="a" style="left:800.0px;top:1094.5px;width:9px;height:9px;border-radius:50%;background:#bc52bc"></div>
<div class="t" style="left:812.0px;top:1093px;font-size:10.5px;color:#646a76;line-height:12px">164.312.c.1</div>
<div class="a" style="left:800.0px;top:1118.5px;width:9px;height:9px;border-radius:50%;background:#9e3533"></div>
<div class="t" style="left:812.0px;top:1117px;font-size:10.5px;color:#646a76;line-height:12px">164.312.c.2</div>
<div class="a" style="left:73px;top:1334px;width:24px;height:24px;border-radius:4px;background:#e9ebef"></div><svg class="a" style="left:78px;top:1341px" width="14" height="11" viewBox="0 0 14 11"><path d="M0.9 0.5H2.9M0.9 3.5H2.9M0.9 6.5H2.9M0.9 9.5H2.9M5.1 0.5H12.9M5.1 3.5H12.9M5.1 6.5H12.9M5.1 9.5H12.9" stroke="#1a1c21" stroke-width="1.1" stroke-linecap="round"/></svg>
<div class="panel" style="left:987px;top:991px;width:915px;height:384px"></div>
<div class="t" style="left:1003px;top:1008px;font-size:14.8px;color:#1a1c21;line-height:17px">Requirements distribution by agent</div>
<div class="a" style="left:1003px;top:1038px;width:883px;height:1px;background:#d3dae6"></div>
<svg class="exp" style="left:1871px;top:1009px" width="14" height="14" viewBox="0 0 14 14"><path d="M9.2 0.5H12.3Q13.5 0.5 13.5 1.7V4.5M0.5 9.2V12.3Q0.5 13.5 1.7 13.5H4.5" fill="none" stroke="#1a1c21" stroke-width="1.1" stroke-linecap="round"/><path d="M10.6 3.3L3.5 10.5" stroke="#1a1c21" stroke-width="0.9" stroke-linecap="round"/></svg>
<div class="a" style="left:1055px;top:1251px;width:671px;height:1px;background:#e6e8ec"></div>
<div class="a" style="left:1055px;top:1221px;width:671px;height:1px;background:#e6e8ec"></div>
<div class="a" style="left:1055px;top:1191px;width:671px;height:1px;background:#e6e8ec"></div>
<div class="a" style="left:1055px;top:1162px;width:671px;height:1px;background:#e6e8ec"></div>
<div class="a" style="left:1055px;top:1132px;width:671px;height:1px;background:#e6e8ec"></div>
<div class="a" style="left:1055px;top:1102px;width:671px;height:1px;background:#e6e8ec"></div>
<div class="a" style="left:1055px;top:1072px;width:671px;height:1px;background:#e6e8ec"></div>
<div class="a" style="left:1055px;top:1072px;width:1px;height:209px;background:#d9d9d9"></div>
<div class="a" style="left:1055px;top:1280px;width:671px;height:1px;background:#d9d9d9"></div>
<div class="a" style="left:1049px;top:1072px;width:6px;height:1px;background:#d9d9d9"></div>
<div class="a" style="left:1049px;top:1280.0px;width:6px;height:1px;background:#d9d9d9"></div>
<div class="t" style="right:872px;top:1274.0px;font-size:10.5px;color:#646a76;line-height:12px">0</div>
<div class="a" style="left:1049px;top:1220.7px;width:6px;height:1px;background:#d9d9d9"></div>
<div class="t" style="right:872px;top:1214.7px;font-size:10.5px;color:#646a76;line-height:12px">200</div>
<div class="a" style="left:1049px;top:1161.4px;width:6px;height:1px;background:#d9d9d9"></div>
<div class="t" style="right:872px;top:1155.4px;font-size:10.5px;color:#646a76;line-height:12px">400</div>
<div class="a" style="left:1049px;top:1102.1px;width:6px;height:1px;background:#d9d9d9"></div>
<div class="t" style="right:872px;top:1096.1px;font-size:10.5px;color:#646a76;line-height:12px">600</div>
<div class="a" style="left:1055px;top:1280px;width:1px;height:6px;background:#d9d9d9"></div>
<div class="a" style="left:1214px;top:1280px;width:1px;height:6px;background:#d9d9d9"></div>
<div class="a" style="left:1567.5px;top:1280px;width:1px;height:6px;background:#d9d9d9"></div>
<div class="a" style="left:1726px;top:1280px;width:1px;height:6px;background:#d9d9d9"></div>
<svg class="a" style="left:0;top:0" width="1919" height="1383" viewBox="0 0 1919 1383"><g opacity=".8"><rect x="1056" y="1097.50" width="317.40" height="182.50" fill="#663db8"/><rect x="1056" y="1087.28" width="317.40" height="10.23" fill="#bc52bc"/><rect x="1056" y="1077.05" width="317.40" height="10.23" fill="#9e3533"/><rect x="1408.7" y="1263.90" width="317.30" height="16.10" fill="#663db8"/><rect x="1408.7" y="1253.79" width="317.30" height="10.11" fill="#bc52bc"/><rect x="1408.7" y="1244.00" width="317.30" height="9.78" fill="#9e3533"/></g></svg>
<div class="t" style="left:1208px;top:1290px;font-size:10.5px;color:#646a76;line-height:12px;transform-origin:0 0;transform:translate(0,33px) rotate(-90deg)">master</div>
<div class="t" style="left:1561.5px;top:1290px;font-size:10.5px;color:#646a76;line-height:12px;transform-origin:0 0;transform:translate(0,27px) rotate(-90deg)">agent</div>
<div class="t" style="left:1291px;top:1326px;width:200px;text-align:center;font-size:10.5px;font-weight:bold;color:#646a76;line-height:12px">agent.name: Descending</div>
<div class="t" style="left:986px;top:1170px;width:60px;text-align:center;font-size:10.5px;font-weight:bold;color:#646a76;line-height:12px;transform:rotate(-90deg)">Count</div>
<div class="a" style="left:1731.0px;top:1070.5px;width:9px;height:9px;border-radius:50%;background:#663db8"></div>
<div class="t" style="left:1743.0px;top:1069px;font-size:10.5px;color:#646a76;line-height:12px">164.312.b</div>
<div class="a" style="left:1731.0px;top:1094.5px;width:9px;height:9px;border-radius:50%;background:#bc52bc"></div>
<div class="t" style="left:1743.0px;top:1093px;font-size:10.5px;color:#646a76;line-height:12px">164.312.c.1</div>
<div class="a" style="left:1731.0px;top:1118.5px;width:9px;height:9px;border-radius:50%;background:#9e3533"></div>
<div class="t" style="left:1743.0px;top:1117px;font-size:10.5px;color:#646a76;line-height:12px">164.312.c.2</div>
<div class="a" style="left:1004px;top:1334px;width:24px;height:24px;border-radius:4px;background:#e9ebef"></div><svg class="a" style="left:1009px;top:1341px" width="14" height="11" viewBox="0 0 14 11"><path d="M0.9 0.5H2.9M0.9 3.5H2.9M0.9 6.5H2.9M0.9 9.5H2.9M5.1 0.5H12.9M5.1 3.5H12.9M5.1 6.5H12.9M5.1 9.5H12.9" stroke="#1a1c21" stroke-width="1.1" stroke-linecap="round"/></svg>
<!-- PANELS_END -->

<!-- scrollbar -->
<div class="a" style="left:1910px;top:0;width:9px;height:1383px;background:#fff"></div>
<div class="a" style="left:1910px;top:0;width:9px;height:737px;background:#e3e3e3"></div>
</body></html>
